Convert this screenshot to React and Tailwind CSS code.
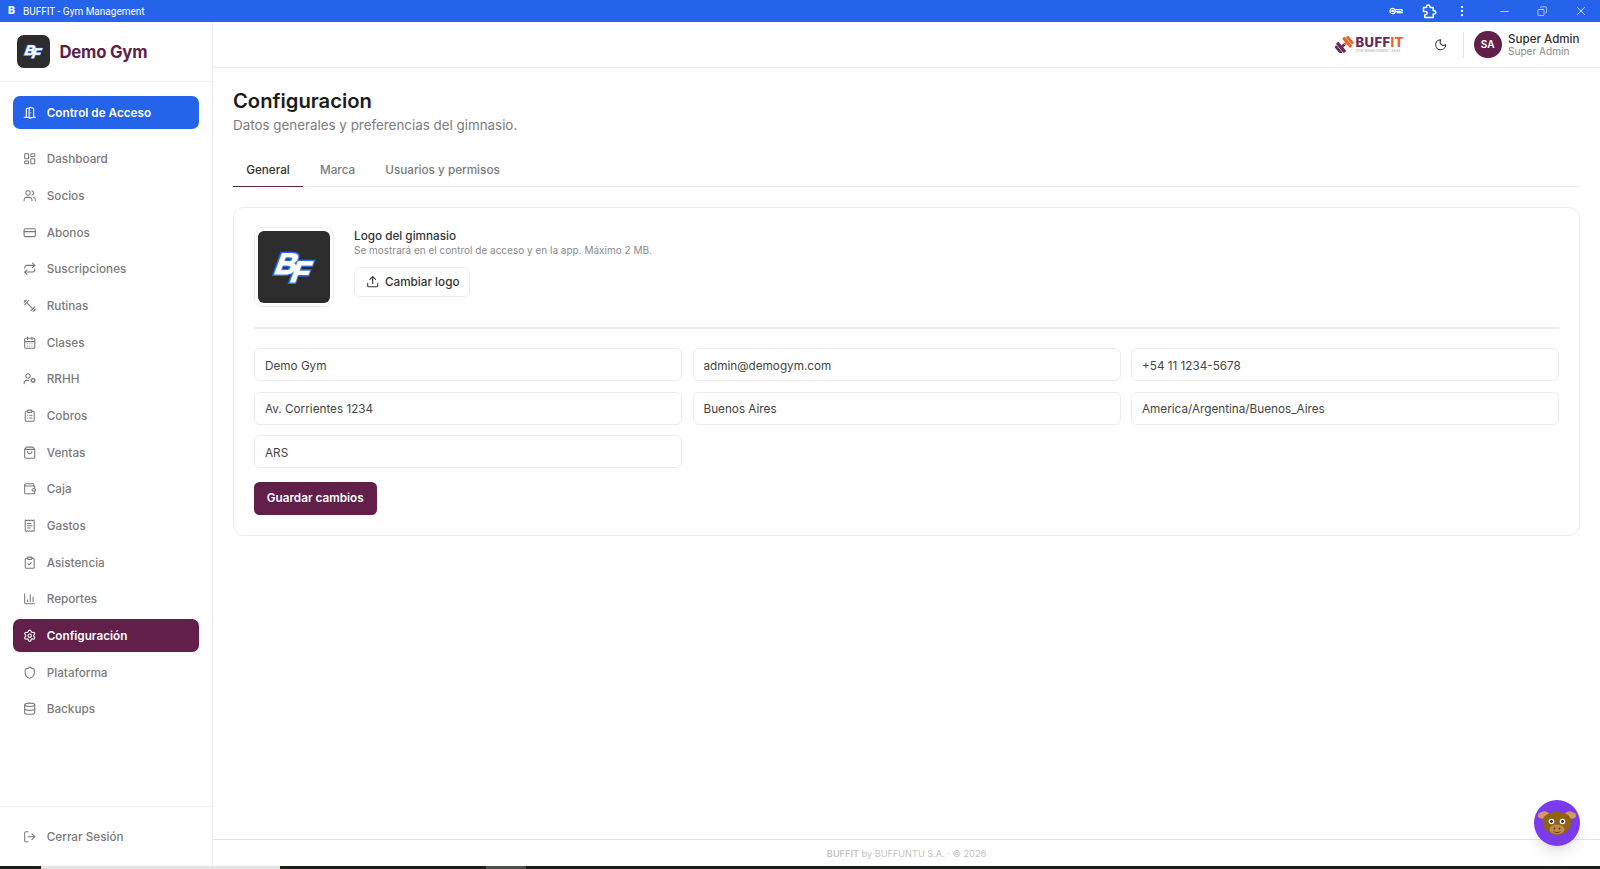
import React from "react";
import {
  DoorOpen, LayoutDashboard, Users, CreditCard, Repeat, CalendarDays, UserCog,
  ClipboardList, ShoppingBag, Wallet, ReceiptText, ClipboardCheck, ChartColumn, Settings,
  Shield, Database, LogOut, Upload, Moon, EllipsisVertical, Minus, Copy, X,
} from "lucide-react";

function DumbbellOld({ size = 24, strokeWidth = 2, className = "" }) {
  return (
    <svg width={size} height={size} viewBox="0 0 24 24" fill="none" stroke="currentColor" strokeWidth={strokeWidth} strokeLinecap="round" strokeLinejoin="round" className={className}>
      <path d="m6.500 6.500 11 11" />
      <path d="m21 21-1-1" />
      <path d="m3 3 1 1" />
      <path d="m18 22 4-4" />
      <path d="m2 6 4-4" />
      <path d="m3 10 7-7" />
      <path d="m14 21 7-7" />
    </svg>
  );
}

const nav = [
  ["Dashboard", LayoutDashboard], ["Socios", Users], ["Abonos", CreditCard], ["Suscripciones", Repeat],
  ["Rutinas", DumbbellOld], ["Clases", CalendarDays], ["RRHH", UserCog], ["Cobros", ClipboardList],
  ["Ventas", ShoppingBag], ["Caja", Wallet], ["Gastos", ReceiptText], ["Asistencia", ClipboardCheck],
  ["Reportes", ChartColumn], ["Configuración", Settings, true], ["Plataforma", Shield], ["Backups", Database],
];

function BF({ className }) {
  const base = { fontFamily: "Liberation Sans, sans-serif", fontWeight: 700, fontSize: 30 };
  const under = { ...base, fill: "#2f6fe0", stroke: "#2f6fe0", strokeWidth: 4 };
  const over = { ...base, fill: "#ffffff", stroke: "#ffffff", strokeWidth: 1 };
  return (
    <svg viewBox="0 0 72 72" className={className}>
      <g transform="translate(14 43) skewX(-20)"><text {...under}>B</text></g>
      <g transform="translate(30 51) skewX(-20)"><text {...under}>F</text></g>
      <g transform="translate(14 43) skewX(-20)"><text {...over}>B</text></g>
      <g transform="translate(30 51) skewX(-20)"><text {...over}>F</text></g>
    </svg>
  );
}

function Row({ icon: Icon, label, active, blue }) {
  const tone = blue
    ? "bg-[#2563eb] text-white font-semibold"
    : active
      ? "bg-[#611f4a] text-white font-semibold"
      : "text-[#7a7a7a] font-medium";
  return (
    <div className={`h-[33px] shrink-0 flex items-center gap-[10px] pl-[10.300px] rounded-[7px] text-[11.72px] ${tone}`}>
      <Icon size={13.44} strokeWidth={blue || active ? 2 : 1.9} className="shrink-0" />
      <span className="pt-[2px]">{label}</span>
    </div>
  );
}

function Field({ value }) {
  return (
    <input
      readOnly
      defaultValue={value}
      className="h-[33px] w-full min-w-0 px-[10px] pt-[2px] rounded-[6px] border-[1.5px] border-[#ececec] bg-white text-[11.72px] text-[#444444] outline-none"
    />
  );
}

function KeyIcon() {
  return (
    <svg width="14" height="10" viewBox="0 0 14 10" fill="none" stroke="white" strokeWidth="1.3">
      <circle cx="3.6" cy="5" r="2.6" />
      <circle cx="3.6" cy="5" r="0.7" fill="white" />
      <path d="M6.4 3.6h6.6v3h-1.6v-1h-1.4v1h-1.4v-1H6.4" />
    </svg>
  );
}

function ExtensionIcon() {
  return (
    <svg width="15" height="15" viewBox="0 0 15 15" fill="none" stroke="white" strokeWidth="1.5" strokeLinejoin="round">
      <path d="M1.500 3.500h3v-.800a1.700 1.700 0 0 1 3.400 0v.800h3.300v3.200h.900a1.700 1.700 0 0 1 0 3.400h-.900v3.400H2.800v-2.700h.7a1.700 1.700 0 0 0 0-3.400h-2z" />
    </svg>
  );
}

function Bull() {
  return (
    <svg viewBox="0 0 46 46" className="w-[46px] h-[46px]">
      <ellipse cx="9.500" cy="15" rx="5.600" ry="3.600" fill="#d39a63" transform="rotate(-12 9.500 15)" />
      <ellipse cx="36.500" cy="15" rx="5.600" ry="3.600" fill="#d39a63" transform="rotate(12 36.500 15)" />
      <path d="M9 19c2-5 8-7 14-7s12 2 14 7c1 5-1 10-5 13-2.500 2-5.500 3-9 3s-6.500-1-9-3c-4-3-6-8-5-13z" fill="#8f6214" />
      <ellipse cx="23" cy="29.500" rx="7.500" ry="5" fill="#bd8a4a" />
      <circle cx="17.500" cy="21.500" r="2.800" fill="#ffffff" />
      <circle cx="28.500" cy="21.500" r="2.800" fill="#ffffff" />
      <circle cx="17.500" cy="21.500" r="1.400" fill="#1f2937" />
      <circle cx="28.500" cy="21.500" r="1.400" fill="#1f2937" />
      <circle cx="20.500" cy="28.500" r="0.900" fill="#5b3410" />
      <circle cx="25.500" cy="28.500" r="0.900" fill="#5b3410" />
      <path d="M19.500 31.500c2 1.500 5 1.500 7 0" fill="none" stroke="#5b3410" strokeWidth="0.8" />
    </svg>
  );
}

function BuffitLogo() {
  return (
    <div className="flex items-center gap-[2px] w-[70px]">
      <svg viewBox="0 0 20 18" className="w-[19px] h-[17px] shrink-0">
        <g transform="rotate(-40 10 9)">
          <g fill="#6b2a55">
            <rect x="0" y="4" width="3" height="10" rx="1" />
            <rect x="3.500" y="2.500" width="3.500" height="13" rx="1" />
            <rect x="7" y="7.500" width="3" height="3" />
          </g>
          <g fill="#e8622a">
            <rect x="10" y="7.500" width="2" height="3" />
            <rect x="12" y="2.500" width="3.500" height="13" rx="1" />
            <rect x="16" y="4" width="3" height="10" rx="1" />
          </g>
        </g>
      </svg>
      <div className="flex flex-col items-start leading-none">
        <span className="text-[13px] font-extrabold tracking-[0.4px] leading-[13px] text-[#6b2a55]">BUFF<span className="text-[#e8622a]">IT</span></span>
        <span className="text-[3px] tracking-[0.35px] leading-[4px] text-[#9a9a9a] whitespace-nowrap">GYM MANAGEMENT SAAS</span>
      </div>
    </div>
  );
}

export default function App() {
  return (
    <div className="w-[1600px] h-[869px] overflow-hidden flex flex-col bg-white font-['Inter',sans-serif]">
      {/* window title bar */}
      <div className="h-[22px] shrink-0 bg-[#2563eb] text-white flex items-center font-['Roboto',sans-serif]">
        <span className="w-[23px] pl-[8px] text-[11px] font-black">B</span>
        <span className="text-[10px]">BUFFIT - Gym Management</span>
        <div className="ml-auto flex items-center">
          <span className="mr-[19px]"><KeyIcon /></span>
          <span className="mr-[18px]"><ExtensionIcon /></span>
          <EllipsisVertical size={14} strokeWidth={2} className="mr-[29px]" />
          <Minus size={13} strokeWidth={1.3} className="mr-[26px]" />
          <Copy size={10.500} strokeWidth={1.400} className="mr-[27px] -scale-x-100" />
          <X size={14} strokeWidth={1.3} className="mr-[12px]" />
        </div>
      </div>

      <div className="flex-1 min-h-0 flex">
        {/* sidebar */}
        <aside className="w-[213px] shrink-0 flex flex-col border-r-[1.5px] border-[#ececec]">
          <div className="h-[60px] shrink-0 flex items-center gap-[10px] pl-[16.500px] border-b-[1.5px] border-[#ececec]">
            <div className="w-[33px] h-[33px] rounded-[7px] bg-[#2d2d2d] flex items-center justify-center">
              <BF className="w-[33px] h-[33px]" />
            </div>
            <span className="pt-[2px] text-[16.8px] font-bold tracking-[-0.25px] text-[#611f4a]">Demo Gym</span>
          </div>
          <div className="flex-1 min-h-0 flex flex-col px-[13px] pt-[14px]">
            <Row icon={DoorOpen} label="Control de Acceso" blue />
            <nav className="mt-[13.700px] flex flex-col gap-[3.670px]">
              {nav.map(([label, Icon, active]) => (
                <Row key={label} icon={Icon} label={label} active={active} />
              ))}
            </nav>
          </div>
          <div className="h-[60px] shrink-0 border-t-[1.5px] border-[#ececec] px-[13px] flex items-center">
            <div className="w-full"><Row icon={LogOut} label="Cerrar Sesión" /></div>
          </div>
        </aside>

        {/* main */}
        <div className="relative flex-1 min-w-0 flex flex-col">
          <header className="h-[46px] shrink-0 border-b-[1.5px] border-[#ececec] flex items-center justify-end pr-[20px]">
            <BuffitLogo />
            <Moon size={13.44} strokeWidth={1.8} className="ml-[29px] text-[#333333]" />
            <div className="ml-[15.500px] w-px h-[26px] bg-[#e2e2e2]" />
            <div className="ml-[10.500px] w-[27.500px] h-[27.500px] rounded-full bg-[#611f4a] text-white text-[10.08px] font-semibold flex items-center justify-center">SA</div>
            <div className="ml-[6.500px] w-[72px] flex flex-col">
              <span className="pt-[1px] text-[11.6px] leading-[13px] font-medium text-[#333333] whitespace-nowrap">Super Admin</span>
              <span className="text-[10.08px] leading-[11px] text-[#8a8a8a] whitespace-nowrap">Super Admin</span>
            </div>
          </header>

          <main className="flex-1 min-h-0 px-[20px] pt-[18px]">
            <h1 className="text-[20.2px] leading-[29px] font-semibold text-[#1c1c1c]">Configuracion</h1>
            <p className="text-[13.38px] leading-[20px] text-[#7c7c7c]">Datos generales y preferencias del gimnasio.</p>

            <div className="mt-[19px] h-[33px] flex border-b-[1.5px] border-[#ececec] text-[11.72px] font-medium text-[#7a7a7a]">
              <div className="h-[33px] w-[70px] pt-[1px] flex items-center justify-center border-b-[1.5px] border-[#611f4a] text-[#333333]">General</div>
              <div className="ml-[17px] h-[31px] pt-[2px] flex items-center">Marca</div>
              <div className="ml-[30px] h-[31px] pt-[2px] flex items-center">Usuarios y permisos</div>
            </div>

            <section className="mt-[20px] h-[328.500px] rounded-[11px] border-[1.5px] border-[#ececec] px-[20px] pt-[19px] flex flex-col">
              <div className="flex items-start gap-[20px]">
                <div className="w-[80px] h-[80px] shrink-0 p-[3px] rounded-[9px] border-[1.5px] border-[#ececec]">
                  <div className="w-full h-full rounded-[6px] bg-[#2d2d2d] flex items-center justify-center">
                    <BF className="w-[71px] h-[71px]" />
                  </div>
                </div>
                <div className="flex flex-col items-start">
                  <div className="mt-[2px] text-[11.72px] leading-[15px] font-medium text-[#333333]">Logo del gimnasio</div>
                  <div className="text-[10px] leading-[12px] text-[#8a8a8a]">Se mostrará en el control de acceso y en la app. Máximo 2 MB.</div>
                  <div className="mt-[11px] h-[30px] w-[116px] flex items-center gap-[6px] pl-[10.500px] rounded-[5.500px] border-[1.5px] border-[#ececec] text-[11.72px] font-medium text-[#333333]">
                    <Upload size={13.44} strokeWidth={1.9} />
                    <span className="pt-[2px]">Cambiar logo</span>
                  </div>
                </div>
              </div>

              <div className="mt-[20px] h-[1.500px] shrink-0 bg-[#ececec]" />

              <div className="mt-[19.500px] grid grid-cols-3 gap-x-[10.500px] gap-y-[10.500px]">
                <Field value="Demo Gym" />
                <Field value="admin@demogym.com" />
                <Field value="+54 11 1234-5678" />
                <Field value="Av. Corrientes 1234" />
                <Field value="Buenos Aires" />
                <Field value="America/Argentina/Buenos_Aires" />
                <Field value="ARS" />
              </div>

              <button className="mt-[13.500px] h-[33px] w-[122.500px] pt-[2px] rounded-[5.500px] bg-[#611f4a] text-white text-[11.72px] font-semibold">Guardar cambios</button>
            </section>
          </main>

          <footer className="h-[27px] shrink-0 pt-[1px] border-t-[1.5px] border-[#e6e6e6] flex items-center justify-center text-[9.17px] text-[#c2c2c2]">
            <span><span className="font-semibold">BUFFIT</span> by BUFFUNTU S.A. · © 2026</span>
          </footer>

          <div className="absolute right-[20px] bottom-[20px] w-[46px] h-[46px] rounded-full bg-[#7c3aed] shadow-lg flex items-center justify-center">
            <Bull />
          </div>
        </div>
      </div>

      {/* taskbar sliver */}
      <div className="h-[3px] shrink-0 bg-[#1a2018] flex">
        <div className="ml-[41px] w-[239px] bg-[#e4e4e4]" />
        <div className="ml-[206px] w-[40px] bg-[#4a504a]" />
      </div>
    </div>
  );
}
